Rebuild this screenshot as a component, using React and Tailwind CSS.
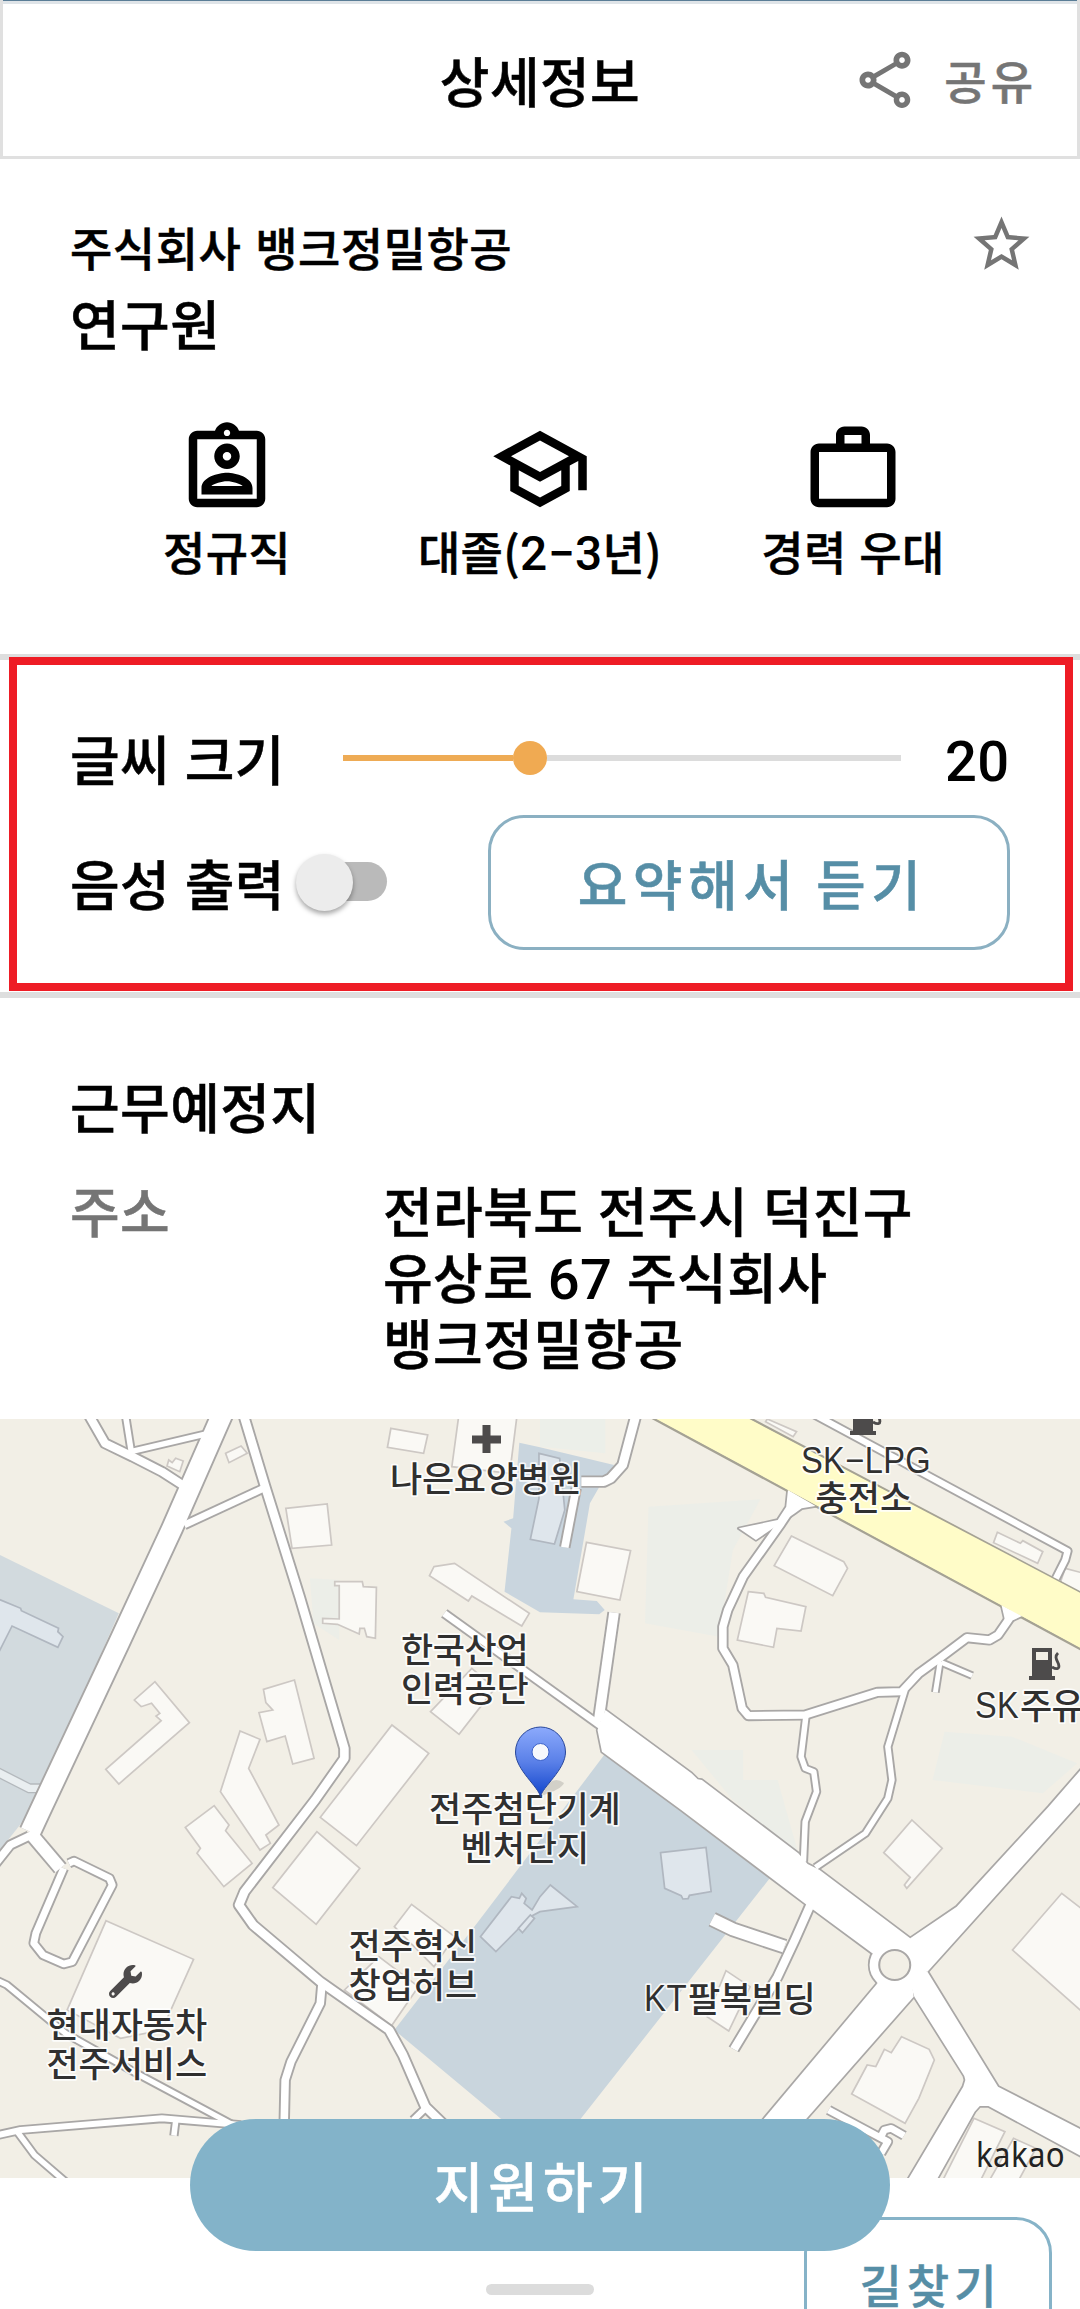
import React from "react";
import {
  MdOutlineShare,
  MdStarOutline,
  MdOutlineAssignmentInd,
  MdOutlineSchool,
  MdWorkOutline,
} from "react-icons/md";
import { FaWrench } from "react-icons/fa";

const R = [1568, 0];
const BL = [0, 1170];
const BR = [1568, 1170];
const O = [0, 0];

// Districts: [points, fill, offset]
const areas = [
  ["315,290 640,268 560,420 520,680 305,640", "#eceee8", R],
  ["0,27 190,27 190,130 0,110", "#ecefe9", R],
  ["440,1020 590,1020 590,1110 690,1110 750,1330 560,1170", "#eceee8", R],
  ["1175,965 1370,980 1560,1060 1460,1150 1140,1110", "#eceee8", R],
  ["900,505 985,510 985,690 910,640", "#eceee8", O],
  ["0,435 345,610 100,1190 0,1320", "#d2dade", O],
  ["1508,98 1568,112 1783,165 1738,235 1713,280 1665,568 1733,573 1756,600 1740,613 1568,607 1465,545 1485,355 1462,335 1490,325", "#c9d5de", O],
  ["1758,1030 1385,1540 1145,1860 1470,2140 1676,2140 2235,1405", "#c9d5dd", O],
];

const buildings = [
  ["1333,10 1502,10 1480,190 1312,170", O],
  ["1135,55 1242,75 1230,130 1125,112", O],
  ["655,130 700,108 718,130 665,158", O],
  ["490,150 500,158 510,145 532,153 522,185 485,168", O],
  ["830,295 950,282 963,405 848,415", O],
  ["972,515 1052,515 1055,530 1093,532 1090,685 1065,680 1058,655 1045,655 1043,672 980,643 937,640 937,625 985,627 985,527 972,527", O],
  ["1260,470 1320,460 1537,610 1515,648 1370,558 1360,573 1247,497", O],
  ["450,815 550,938 345,1122 307,1078 468,932 453,918 464,910 440,880 410,890 390,870", O],
  ["765,838 855,810 912,1045 850,1062 828,978 775,995 752,908 792,900 772,878", O],
  ["697,963 755,988 722,1075 810,1245 772,1275 785,1300 755,1320 640,1145", O],
  ["1138,945 1245,1030 1035,1307 930,1222", O],
  ["1370,775 1437,835 1333,973 1250,905", O],
  ["622,17 665,75 655,92 732,190 650,260 572,160 582,145 538,82", BL],
  ["920,95 1045,205 918,373 792,263", BL],
  ["308,362 562,478 470,690 350,715 195,630", BL],
  ["1195,313 1320,410 1260,500 1145,380", BL],
  ["1000,570 1100,470 1215,560 1137,677", BL],
  ["135,397 263,422 232,570 107,545", R],
  ["730,378 882,455 893,475 850,557 680,467", R],
  ["605,545 650,550 655,562 772,590 758,663 688,655 678,712 573,690", R],
  ["1328,367 1395,400 1402,392 1460,425 1445,460 1317,398", R],
  ["1525,475 1580,490 1580,555 1510,520", R],
  ["660,27 745,65 735,80 655,35", R],
  ["1080,60 1168,145 1065,265 1058,255 1075,232 998,158", BR],
  ["1515,280 1590,340 1590,650 1372,450", BR],
  ["540,512 610,560 548,693 485,650", BR],
  ["1050,710 1130,748 1145,780 1100,895 1060,970 905,882 950,795 975,800 1000,748 1020,758", BR],
  ["1260,955 1350,995 1275,1150 1165,1150", BR],
  ["1375,1015 1440,1045 1385,1150 1300,1150", BR],
];

const blueBuildings = [
  ["-10,565 60,595 62,602 170,655 168,665 183,680 168,712 35,648 -10,740", O],
  ["1565,130 1625,145 1640,300 1610,402 1540,388 1565,265", O],
  ["350,158 482,142 497,275 434,286 430,296 415,297 410,287 362,265", BR],
  ["1395,410 1485,290 1508,295 1515,280 1528,295 1522,310 1545,330 1568,290 1598,255 1676,320 1568,335 1540,350 1440,455", BL],
  ["1505,385 1540,345 1552,355 1517,398", BL],
];

// Streets drawn as centre lines: [points, width, offset]
const streets = [
  ["655,-10 500,355 345,700 115,1205 88,1265", 66, O],
  ["85,1265 175,1375", 44, O],
  ["85,1278 30,1305 -20,1370", 30, O],
  ["200,190 215,183 318,235 326,255 210,485 185,492 125,465 98,430 104,400 185,205", 28, BL],
  ["700,-10 770,230 870,560 1000,1015 1000,1045 915,1170 710,1445 694,1485 735,1545 930,1715 1130,1860 1170,1935 1235,2090 1310,2165", 33, O],
  ["1235,2095 1200,2130", 26, O],
  ["535,345 765,235", 28, O],
  ["255,10 305,100 385,140 470,185 530,225", 32, O],
  ["362,0 382,130", 24, O],
  ["380,125 605,70", 24, O],
  ["935,1720 930,1780 845,1955 828,2010 825,2150", 30, O],
  ["-20,1705 20,1725 190,1870 400,1992 650,2130 740,2180", 24, O],
  ["-10,2176 60,2160 470,2125 700,2145", 26, O],
  ["50,2165 100,2235 190,2315", 24, O],
  ["510,2135 505,2177", 24, O],
  ["285,-10 240,165 205,205 185,215 120,215", 34, R],
  ["105,235 72,412", 30, R],
  ["215,608 170,935", 36, R],
  ["1290,610 1745,948", 28, O],
  ["745,270 700,340 590,500 545,600 531,650 531,715 560,765 587,895 605,917 770,915 980,847 1050,845 1100,790 1160,745 1240,683 1305,690 1330,675 1380,600", 30, R],
  ["772,920 758,1040 770,1075 795,1085 803,1145 770,1235 765,1355", 24, R],
  ["1060,840 1010,1010 1022,1110 1010,1165 945,1270 800,1372", 24, R],
  ["1162,755 1148,847", 22, R],
  ["1165,757 1255,797", 22, R],
  ["790,10 1532,423 1525,450 1498,505", 26, R],
  ["785,315 740,420 690,530 563,748", 32, BR],
  ["500,358 560,388 710,440", 44, BR],
  ["838,930 1010,1025 990,1060", 28, BR],
  ["985,1020 1000,990 1020,985 1057,1007", 28, BR],
];

// Wide roads drawn as outlines
const wideRoads = [
  ["577,355 690,330 715,290 720,240 800,288 760,295 740,310 627,390", R],
  ["1340,585 1350,630 1375,630 1400,618", R],
  ["1758,900 2008,1090 2026,1108 2038,1110 2318,1330 2345,1362 2380,1380 2643,1585 2640,1700 2533,1630 2343,1485 1978,1200 1748,1025 1735,960"],
  ["2643,1585 2778,1490 3045,1190 3146,1070 3146,1165 2693,1685 2600,1650"],
  ["2548,1720 2150,2210 2270,2210 2653,1760 2640,1650"],
  ["2655,1760 2800,1998 2803,2010 2797,2030 2630,2320 2714,2320 2830,2105 2845,2088 2870,2088 3146,2242 3146,2162 2898,2030 2693,1685 2620,1640"],
];

const off = (o) => `translate(${(o || O)[0]} ${(o || O)[1]})`;

const labels = [
  ["나은요양병원", 486, 60, 190],
  ["충전소", 864, 79, 95],
  ["한국산업", 465, 231, 126],
  ["인력공단", 465, 270, 126],
  ["전주첨단기계", 525, 390, 190],
  ["벤처단지", 525, 429, 127],
  ["전주혁신", 413, 527, 127],
  ["창업허브", 413, 566, 127],
  ["현대자동차", 127, 606, 159],
  ["전주서비스", 127, 645, 159],
];

function Pump({ x, y }) {
  return (
    <g transform={`translate(${x} ${y})`} fill="#4d4b4b">
      <path fillRule="evenodd" d="M3 0H23V28H26V32H0V28H3ZM7 4V12H19V4Z" />
      <path d="M23 19C28 22 31 21 29.500 16C28 12 25 9 29 5" fill="none" stroke="#4d4b4b" strokeWidth="2.8" />
    </g>
  );
}

function MapView() {
  return (
    <div className="relative h-[759px] w-full shrink-0 overflow-hidden bg-[#f2efe6]">
      <svg className="block h-[759px] w-[1080px]" viewBox="0 27 3136 2277" preserveAspectRatio="none">
        {areas.map(([p, f, o], i) => (
          <polygon key={i} points={p} fill={f} transform={off(o)} />
        ))}
        <g fill="#faf9f5" stroke="#cdc8c4" strokeWidth="5">
          {buildings.map(([p, o], i) => (
            <polygon key={i} points={p} transform={off(o)} />
          ))}
        </g>
        <g fill="#dfe6ec" stroke="#b0b7c0" strokeWidth="5">
          {blueBuildings.map(([p, o], i) => (
            <polygon key={i} points={p} transform={off(o)} />
          ))}
        </g>
        <path d="M-10 1085L85 1135H120" fill="none" stroke="#b4b9bd" strokeWidth="30" />
        <path d="M-10 1085L85 1135H120" fill="none" stroke="#e9eef0" strokeWidth="22" />
        <g fill="none" stroke="#a9a7a6" strokeLinejoin="round">
          {streets.map(([p, w, o], i) => (
            <polyline key={i} points={p} strokeWidth={w + 3} transform={off(o)} />
          ))}
        </g>
        <g fill="none" stroke="#a9a7a6" strokeWidth="10" strokeLinejoin="round">
          {wideRoads.map(([p, o], i) => (
            <polygon key={i} points={p} transform={off(o)} />
          ))}
          <circle cx="2598" cy="1665" r="73" />
        </g>
        <polygon points="1870,10 2150,10 3150,555 3150,724" fill="#fffcc8" stroke="#a5a294" strokeWidth="8" />
        <g fill="none" stroke="#fff" strokeLinejoin="round">
          {streets.map(([p, w, o], i) => (
            <polyline key={i} points={p} strokeWidth={w - 8} transform={off(o)} />
          ))}
        </g>
        <g fill="#fff">
          {wideRoads.map(([p, o], i) => (
            <polygon key={i} points={p} transform={off(o)} />
          ))}
          <circle cx="2598" cy="1665" r="73" />
        </g>
        <polygon points="1906,27 2176,27 3136,548 3136,713" fill="#fffcc8" />
        <circle cx="2598" cy="1665" r="45" fill="#f2efe6" stroke="#a9a7a6" strokeWidth="6" />
      </svg>

      <svg className="absolute inset-0 h-[759px] w-[1080px]" viewBox="0 0 1080 759">
        <defs>
          <linearGradient id="pin" x1="0" y1="0" x2="0" y2="1">
            <stop offset="0" stopColor="#8caafc" />
            <stop offset="0.5" stopColor="#5a80e8" />
            <stop offset="1" stopColor="#1044cc" />
          </linearGradient>
        </defs>
        <path d="M482.5 6h8v10.5H501v8h-10.500V34h-8v-9.500H472v-8h10.500Z" fill="#4d4b4b" />
        <Pump x={850} y={-16} />
        <Pump x={1029} y={229} />
        <FaWrench x={109} y={546} size={33} color="#4d4b4b" />
        <g
          fill="#303030"
          stroke="#fff"
          strokeOpacity="0.85"
          strokeWidth="3.500"
          strokeLinejoin="round"
          paintOrder="stroke"
          textAnchor="middle"
          fontSize="35"
          fontWeight="500"
          fontFamily='"Noto Sans CJK KR", sans-serif'
        >
          {labels.map(([t, x, y, w]) => (
            <text key={t} x={x} y={y + 13} textLength={w + 2}>{t}</text>
          ))}
          <text x="866" y="54" fontSize="37" fontWeight="400" textLength="130" lengthAdjust="spacingAndGlyphs" fontFamily='"Liberation Sans", sans-serif'>SK−LPG</text>
          <text x="975" y="299" textAnchor="start" fontSize="37" fontWeight="400" textLength="44" lengthAdjust="spacingAndGlyphs" fontFamily='"Liberation Sans", sans-serif'>SK</text>
          <text x="1020" y="300" textAnchor="start" textLength="64">주유</text>
          <text x="644" y="592" textAnchor="start" fontSize="37" fontWeight="400" textLength="43" lengthAdjust="spacingAndGlyphs" fontFamily='"Liberation Sans", sans-serif'>KT</text>
          <text x="688" y="593" textAnchor="start" textLength="128">팔복빌딩</text>
        </g>
        <path d="M541 377L549 364Q556 358 564 364Q562 370 541 377Z" fill="#000" opacity="0.13" />
        <path
          d="M540.500 378C539 368 515.500 351 515.500 333A25 25 0 0 1 565.500 333C565.500 351 542 368 540.500 378Z"
          fill="url(#pin)"
          stroke="#28479c"
          strokeWidth="1"
        />
        <circle cx="540.500" cy="333" r="8.500" fill="#f7f8fc" stroke="#3c62c9" strokeWidth="1" />
        <text x="976" y="748" fontSize="34" fill="#222" textLength="89" lengthAdjust="spacingAndGlyphs" fontFamily='"Noto Sans", sans-serif' fontWeight="400" stroke="none" className="[-webkit-text-stroke:0px]">kakao</text>
      </svg>
    </div>
  );
}

function Num({ children }) {
  return (
    <span className="font-[Roboto] text-[1.04em] leading-none font-medium [-webkit-text-stroke:0px]">{children}</span>
  );
}

function Fact({ icon: Icon, children }) {
  return (
    <div className="flex flex-col items-center">
      <Icon size={102} />
      <span className="mt-[-3px] text-[46px] leading-[66px]">{children}</span>
    </div>
  );
}

export default function App() {
  return (
    <div className="relative flex h-[2309px] w-[1080px] flex-col overflow-hidden bg-white font-['Noto_Sans_CJK_KR',sans-serif] font-medium tracking-[0.4px] text-black [-webkit-text-stroke:0.5px_currentColor] [word-spacing:2px]">
      <header className="grid h-[159px] shrink-0 grid-cols-[1fr_auto_1fr] items-center border-x-[3px] border-b-[3px] border-[#e0e0e0] shadow-[inset_0_1px_0_#5a7d96,inset_0_4px_0_#dfe4e8]">
        <span />
        <h1 className="pt-[4px] text-[54px] leading-[78px]">상세정보</h1>
        <div className="flex items-center justify-end gap-[25px] pt-[2px] pr-[40px] text-[#757575]">
          <MdOutlineShare size={68} className="mt-px" />
          <span className="text-[46px] leading-[66px] tracking-[4px]">공유</span>
        </div>
      </header>

      <section className="h-[495px] shrink-0 pt-[54px]">
        <div className="flex justify-between pl-[70px] pr-[45px]">
          <div>
            <p className="text-[46px] leading-[66px] tracking-[0.5px] [word-spacing:3px]">주식회사 뱅크정밀항공</p>
            <h2 className="mt-[5px] text-[54px] leading-[78px]">연구원</h2>
          </div>
          <MdStarOutline size={67} className="mt-[-2px] text-[#757575]" />
        </div>
        <div className="mt-[56px] grid grid-cols-[313px_313px_313px] justify-center">
          <Fact icon={MdOutlineAssignmentInd}>정규직</Fact>
          <Fact icon={MdOutlineSchool}>
            대졸(<Num>2−3</Num>년)
          </Fact>
          <Fact icon={MdWorkOutline}>경력 우대</Fact>
        </div>
      </section>

      <section className="relative h-[344px] shrink-0 border-y-[6px] border-[#dedede]">
        <div className="absolute top-[-3px] left-[9px] h-[334px] w-[1064px] border-8 border-[#ee1c25]" />
        <div className="flex items-center pt-[59px] pl-[70px] text-[54px] leading-[78px]">
          <span className="w-[273px]">글씨 크기</span>
          <div className="flex h-[34px] w-[558px] items-center">
            <div className="h-[6px] w-[170px] bg-[#eeab55]" />
            <div className="size-[34px] rounded-full bg-[#f0aa52]" />
            <div className="h-[6px] flex-1 bg-[#dcdcdc]" />
          </div>
          <span className="ml-[44px]">
            <Num>20</Num>
          </span>
        </div>
        <div className="mt-[18px] flex items-center pr-[70px] pl-[70px]">
          <span className="w-[226px] text-[54px] leading-[78px]">음성 출력</span>
          <div className="flex items-center">
            <div className="z-10 size-[57px] rounded-full bg-[#ececec] shadow-[0_3px_5px_rgba(0,0,0,0.35)]" />
            <div className="mt-[-2px] ml-[-47px] h-[39px] w-[81px] rounded-full bg-[#bababa]" />
          </div>
          <button className="ml-auto h-[135px] w-[522px] rounded-[36px] border-[3px] border-[#8bb0c2] pl-[6px] text-[54px] leading-[78px] tracking-[5.5px] text-[#568ea6]">
            요약해서 듣기
          </button>
        </div>
      </section>

      <section className="h-[421px] shrink-0 pt-[69px] pl-[70px] text-[54px]">
        <h2 className="leading-[78px]">근무예정지</h2>
        <div className="mt-[32px] flex leading-[66px]">
          <span className="w-[313px] text-[#757575]">주소</span>
          <p>
            전라북도 전주시 덕진구
            <br />
            유상로 <Num>67</Num> 주식회사
            <br />
            뱅크정밀항공
          </p>
        </div>
      </section>

      <MapView />

      <button className="mt-[39px] ml-[804px] h-[132px] w-[248px] shrink-0 rounded-[36px] border-[3px] border-[#86b3c8] pl-[5px] text-[46px] leading-[66px] tracking-[5px] text-[#568ea6]">
        길찾기
      </button>
      <button className="absolute top-[2119px] left-[190px] h-[132px] w-[700px] rounded-full bg-[#83b3c9] pl-[6px] text-[54px] leading-[78px] tracking-[5px] text-white">
        지원하기
      </button>
      <div className="absolute top-[2284px] left-[486px] h-[11px] w-[108px] rounded-full bg-[#dcdcdc]" />
    </div>
  );
}
